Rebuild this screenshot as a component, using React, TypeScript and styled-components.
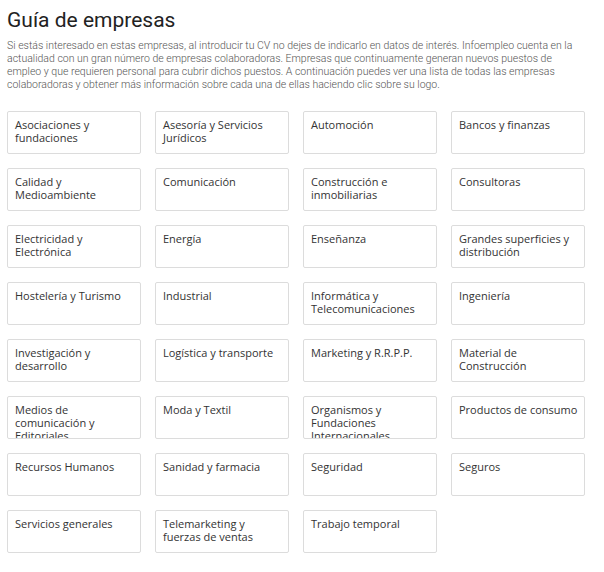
import styled, { createGlobalStyle } from "styled-components";

const categories = [
  "Asociaciones y fundaciones",
  "Asesoría y Servicios Jurídicos",
  "Automoción",
  "Bancos y finanzas",
  "Calidad y Medioambiente",
  "Comunicación",
  "Construcción e inmobiliarias",
  "Consultoras",
  "Electricidad y Electrónica",
  "Energía",
  "Enseñanza",
  "Grandes superficies y distribución",
  "Hostelería y Turismo",
  "Industrial",
  "Informática y Telecomunicaciones",
  "Ingeniería",
  "Investigación y desarrollo",
  "Logística y transporte",
  "Marketing y R.R.P.P.",
  "Material de Construcción",
  "Medios de comunicación y Editoriales",
  "Moda y Textil",
  "Organismos y Fundaciones Internacionales",
  "Productos de consumo",
  "Recursos Humanos",
  "Sanidad y farmacia",
  "Seguridad",
  "Seguros",
  "Servicios generales",
  "Telemarketing y fuerzas de ventas",
  "Trabajo temporal",
];

export default function App() {
  return (
    <>
      <GlobalStyle />
      <Page>
        <Title>Guía de empresas</Title>
        <Intro>
          Si estás interesado en estas empresas, al introducir tu CV no dejes
          de indicarlo en datos de interés. Infoempleo cuenta en la actualidad
          con un gran número de empresas colaboradoras. Empresas que
          continuamente generan nuevos puestos de empleo y que requieren
          personal para cubrir dichos puestos. A continuación puedes ver una
          lista de todas las empresas colaboradoras y obtener más información
          sobre cada una de ellas haciendo clic sobre su logo.
        </Intro>
        <Grid>
          {categories.map((c) => (
            <Card key={c} href="#">
              {c}
            </Card>
          ))}
        </Grid>
      </Page>
    </>
  );
}

const GlobalStyle = createGlobalStyle`
  body {
    margin: 0;
    background: #fff;
  }
`;
const Page = styled.div`
  padding: 7px 19px 0 7px;
  font-family: Roboto, "Liberation Sans", sans-serif;
`;
const Title = styled.h1`
  margin: 0;
  font-size: 21px;
  line-height: 26px;
  font-weight: 400;
  color: #222;
`;
const Intro = styled.p`
  margin: 6px 0 0;
  font-size: 10.5px;
  line-height: 13px;
  font-weight: 300;
  color: #555;
`;
const Grid = styled.div`
  margin-top: 20px;
  display: grid;
  grid-template-columns: repeat(4, 134px);
  grid-auto-rows: 43px;
  column-gap: 14px;
  row-gap: 14px;
`;
const Card = styled.a`
  box-sizing: border-box;
  display: block;
  overflow: hidden;
  padding: 6px 3px 0 7px;
  border: 1px solid #dcdcdc;
  border-radius: 2px;
  background: #fff;
  font-family: "Open Sans", sans-serif;
  font-size: 11px;
  line-height: 13px;
  color: #333;
  text-decoration: none;
`;
